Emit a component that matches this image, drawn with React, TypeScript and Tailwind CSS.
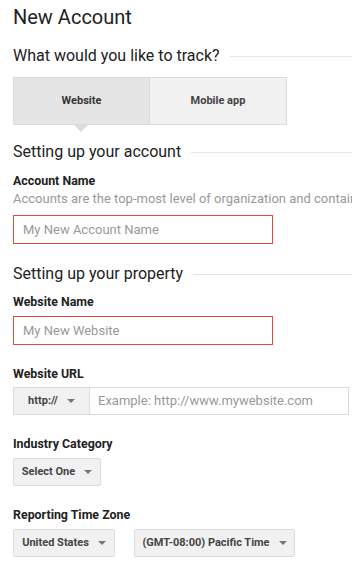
import React from "react";

function Caret() {
  return <span className="inline-block w-0 h-0 border-l-[4px] border-r-[4px] border-t-[4px] border-l-transparent border-r-transparent border-t-[#777] ml-[9px]" />;
}

function Heading({ text, className }: { text: string; className?: string }) {
  return (
    <div className={`flex items-center h-5 ${className ?? ""}`}>
      <span className="text-[16px] leading-5 text-[#222] whitespace-nowrap">{text}</span>
      <div className="flex-1 h-px bg-[#e5e5e5] ml-[10px]" />
    </div>
  );
}

function Label({ text, className }: { text: string; className?: string }) {
  return <div className={`text-[12.4px] leading-4 h-4 font-bold text-[#222] ${className ?? ""}`}>{text}</div>;
}

function SelectBtn({ text, width }: { text: string; width: string }) {
  return (
    <div className={`${width} h-[28px] flex items-center justify-center bg-[#f1f1f1] border border-[#dcdcdc] rounded-[2px] text-[11px] font-bold text-[#444]`}>
      {text}
      <Caret />
    </div>
  );
}

export default function App() {
  return (
    <div className="w-[352px] h-[568px] overflow-hidden bg-white pl-[13px] font-['Roboto',sans-serif]">
      <div className="mt-[5px] h-6 text-[20px] leading-6 text-[#222]">New Account</div>

      <Heading text="What would you like to track?" className="mt-[17px]" />

      <div className="mt-[11px] relative flex w-[274px] h-[48px]">
        <div className="w-[137px] flex items-center justify-center bg-[#e5e5e5] border border-[#dcdcdc] text-[11px] font-bold text-[#333]">
          Website
        </div>
        <div className="w-[137px] flex items-center justify-center bg-[#f1f1f1] border border-l-0 border-[#dcdcdc] text-[11px] font-bold text-[#444]">
          Mobile app
        </div>
        <span className="absolute left-[61px] top-[48px] w-0 h-0 border-l-[7px] border-r-[7px] border-t-[7px] border-l-transparent border-r-transparent border-t-[#dcdcdc]" />
      </div>

      <Heading text="Setting up your account" className="mt-[17px]" />
      <Label text="Account Name" className="mt-[11px]" />
      <div className="mt-[2px] h-4 w-[339px] overflow-hidden text-[13px] leading-4 text-[#999] whitespace-nowrap">
        Accounts are the top-most level of organization and contain one or more tracking IDs.
      </div>
      <div className="mt-[8px] w-[260px] h-[29px] border border-[#dd4b39] flex items-center pl-[9px] text-[13px] text-[#999]">
        My New Account Name
      </div>

      <Heading text="Setting up your property" className="mt-[20px]" />
      <Label text="Website Name" className="mt-[10px]" />
      <div className="mt-[6px] w-[260px] h-[29px] border border-[#dd4b39] flex items-center pl-[9px] text-[13px] text-[#999]">
        My New Website
      </div>

      <Label text="Website URL" className="mt-[21px]" />
      <div className="mt-[5px] flex h-[28px] w-[336px]">
        <div className="w-[77px] flex items-center justify-center bg-[#f1f1f1] border border-[#dcdcdc] text-[11px] font-bold text-[#444]">
          http://
          <Caret />
        </div>
        <div className="flex-1 border border-l-0 border-[#d9d9d9] flex items-center pl-[8px] text-[13px] text-[#999]">
          Example: http://www.mywebsite.com
        </div>
      </div>

      <Label text="Industry Category" className="mt-[21px]" />
      <div className="mt-[6px] flex">
        <SelectBtn text="Select One" width="w-[88px]" />
      </div>

      <Label text="Reporting Time Zone" className="mt-[21px]" />
      <div className="mt-[6px] flex gap-[19px]">
        <SelectBtn text="United States" width="w-[102px]" />
        <SelectBtn text="(GMT-08:00) Pacific Time" width="w-[161px]" />
      </div>
    </div>
  );
}
